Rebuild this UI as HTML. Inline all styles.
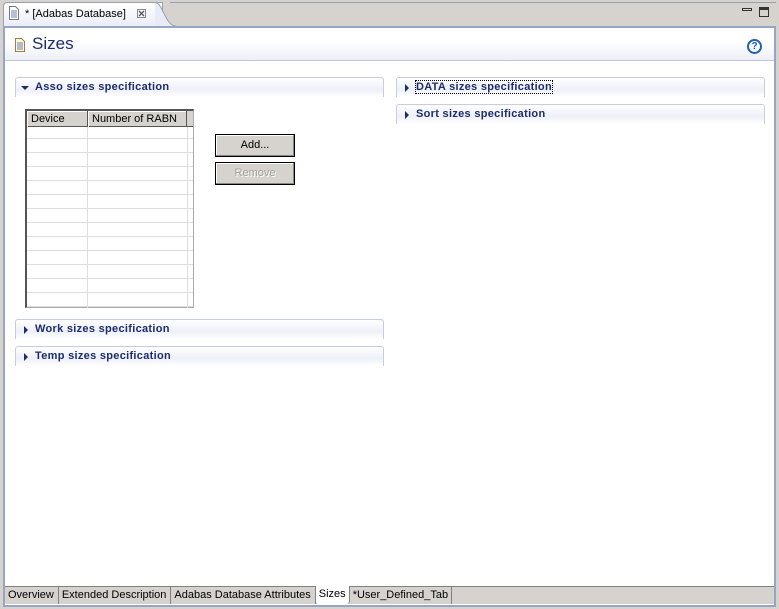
<!DOCTYPE html>
<html><head><style>
*{margin:0;padding:0;box-sizing:border-box}
body{width:779px;height:609px;background:#d6d3ce;position:relative;overflow:hidden;font-family:"Liberation Sans",sans-serif;font-size:11px;color:#000}
.a{position:absolute}
.frame{left:3px;top:26px;width:773px;height:581px;border:2px solid #98a4c4;background:#fff}
.sec{position:absolute;height:20px;border:1px solid #c8cce0;border-bottom:none;border-radius:3px 3px 0 0;background:linear-gradient(#fff,#eef0f8 60%,#fff);font-weight:bold;color:#1c2c6c;font-size:11px;padding:3px 0 0 19px;letter-spacing:0.3px}
.tri{position:absolute;width:0;height:0}
.tr{border-top:4px solid transparent;border-bottom:4px solid transparent;border-left:4px solid #1c2c6c;left:8px;top:6px}
.td{border-left:4px solid transparent;border-right:4px solid transparent;border-top:4px solid #1c2c6c;left:5px;top:8px}
.btn{position:absolute;width:80px;height:23px;border:1px solid #000;background:#d6d3ce;text-align:center;line-height:21px;box-shadow:inset -1px -1px #888,inset 1px 1px #fff}
</style></head><body>
<div class="a" style="left:3px;top:2px;width:160px;height:26px;background:linear-gradient(#fff,#e8ecf6);border:1px solid #9aa0b0;border-bottom:none;border-radius:4px 0 0 0"></div>
<svg class="a" style="left:155px;top:2px" width="22" height="25"><path d="M0 0.5 C8 0.5 10 24 21 24 L21 25 L0 25Z" fill="#e8ecf6"/><path d="M0 0.5 C8 0.5 10 24 21 24" fill="none" stroke="#9aa0b0"/></svg>
<div class="a" style="left:170px;top:2px;width:606px;height:1px;background:#9aa0b0"></div>
<svg class="a" style="left:8px;top:6px" width="12" height="14"><path d="M1.5 0.5h6l3 3v10h-9z" fill="#fff" stroke="#7a7a7a"/><path d="M3 5h6M3 7h6M3 9h6M3 11h6" stroke="#6a80b0"/></svg>
<div class="a" style="left:25px;top:8px">* [Adabas Database]</div>
<svg class="a" style="left:137px;top:9px" width="10" height="10"><rect x="0.5" y="0.5" width="8" height="8" fill="none" stroke="#888"/><path d="M2 2l5 5M7 2l-5 5" stroke="#555" stroke-width="1.3"/></svg>
<div class="a" style="left:742px;top:8px;width:10px;height:3px;border:1px solid #333"></div>
<div class="a" style="left:759px;top:7px;width:10px;height:10px;border:1px solid #333;border-top:3px solid #333"></div>
<div class="a frame"></div>
<div class="a" style="left:5px;top:28px;width:769px;height:33px;background:linear-gradient(#fff,#fff 40%,#eef0f8);border-bottom:1px solid #c0c4dc"></div>
<svg class="a" style="left:14px;top:38px" width="11" height="14"><path d="M1.5 0.5h6l3 3v10h-9z" fill="#fff8e0" stroke="#a08040"/><path d="M3 5h6M3 7h6M3 9h6M3 11h6" stroke="#6a80b0"/></svg>
<div class="a" style="left:32px;top:34px;font-size:17px;color:#1c2c6c">Sizes</div>
<div class="a" style="left:747px;top:39px;width:15px;height:15px;border:2px solid #2060b0;border-radius:50%;color:#2060b0;font-weight:bold;font-size:10px;text-align:center;line-height:11px">?</div>
<div class="sec" style="left:15px;top:77px;width:369px"><span class="tri td"></span>Asso sizes specification</div>
<div class="sec" style="left:396px;top:77px;width:369px"><span class="tri tr"></span><span style="outline:1px dotted #000">DATA sizes specification</span></div>
<div class="sec" style="left:396px;top:104px;width:369px"><span class="tri tr"></span>Sort sizes specification</div>
<div class="sec" style="left:15px;top:319px;width:369px"><span class="tri tr"></span>Work sizes specification</div>
<div class="sec" style="left:15px;top:346px;width:369px"><span class="tri tr"></span>Temp sizes specification</div>
<div class="a" style="left:25px;top:109px;width:169px;height:199px;border:1px solid #aaa;border-left:2px solid #555;border-top:2px solid #555;background:#fff;background-image:linear-gradient(#ddd 1px,transparent 1px);background-size:100% 14px;background-position:0 13px"></div>
<div class="a" style="left:87px;top:127px;width:1px;height:181px;background:#ddd"></div>
<div class="a" style="left:187px;top:127px;width:1px;height:181px;background:#ddd"></div>
<div class="a" style="left:27px;top:111px;width:166px;height:16px;background:#d6d3ce;border-bottom:1px solid #555"></div>
<div class="a" style="left:27px;top:111px;width:61px;height:16px;border-right:1px solid #555;box-shadow:inset 1px 1px #fff;padding:2px 0 0 4px">Device</div>
<div class="a" style="left:88px;top:111px;width:99px;height:16px;border-right:1px solid #555;box-shadow:inset 1px 1px #fff;padding:2px 0 0 4px">Number of RABN</div>
<div class="btn" style="left:215px;top:134px">Add...</div>
<div class="btn" style="left:215px;top:162px;color:#a0a0a0;text-shadow:1px 1px #fff">Remove</div>
<div class="a" style="left:5px;top:586px;width:769px;height:18px;background:#d6d3ce;border-top:1px solid #808080"></div>
<div class="a" style="left:5px;top:587px;height:17px;display:flex;font-size:11px">
<div style="padding:2px 4px 0 3px;border-right:1px solid #808080">Overview</div>
<div style="padding:2px 4px 0 3px;border-right:1px solid #808080">Extended Description</div>
<div style="padding:2px 4px 0 3px;border-right:1px solid #808080">Adabas Database Attributes</div>
<div style="padding:2px 3px 0 3px;background:#fff;margin-top:-1px;border-right:1px solid #808080;border-radius:0 0 3px 3px">Sizes</div>
<div style="padding:2px 3px 0 3px;border-right:1px solid #808080">*User_Defined_Tab</div>
</div>
</body></html>
